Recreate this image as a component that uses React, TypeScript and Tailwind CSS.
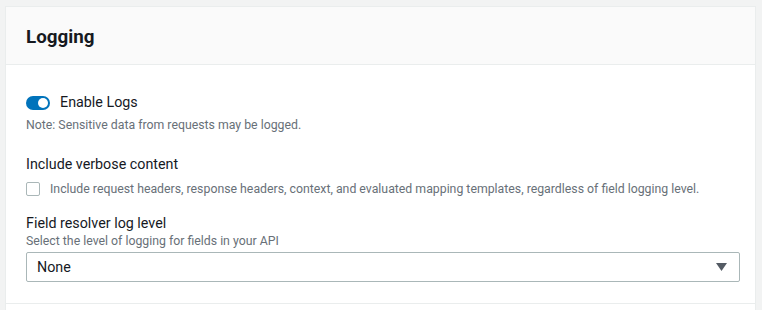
import React from 'react';

const font = { fontFamily: '"Amazon Ember", Roboto, "Helvetica Neue", Arial, sans-serif' };

const App: React.FC = () => {
  return (
    <div className="min-h-[310px] bg-[#f2f3f3] pt-[7px] pl-[6px] pr-[7px]" style={font}>
      <div className="bg-white shadow-[0_0_0_1px_#eaeded]">
        {/* Header */}
        <div className="h-[58px] bg-[#fafafa] border-b border-[#eaeded] flex items-center px-[20px] pt-[3px]">
          <h2 className="text-[18.8px] font-bold text-[#16191f]">Logging</h2>
        </div>

        {/* Body */}
        <div className="px-[20px] pt-[30px] pb-[21px] border-b border-[#eaeded]">
          <div className="flex items-center gap-[10px] h-[16px]">
            <div className="w-[24px] h-[14px] rounded-full bg-[#0073bb] flex items-center justify-end pr-[2px]">
              <div className="w-[10px] h-[10px] rounded-full bg-white"></div>
            </div>
            <span className="text-[14.3px] text-[#16191f]">Enable Logs</span>
          </div>
          <p className="text-[12.3px] text-[#687078] mt-[6px] leading-[16px]">
            Note: Sensitive data from requests may be logged.
          </p>

          <div className="mt-[21px] text-[14.3px] text-[#16191f] leading-[20px]">Include verbose content</div>
          <div className="flex items-center gap-[10px] mt-[6px]">
            <div className="w-[14px] h-[14px] rounded-[2px] border border-[#aab7b8] bg-white"></div>
            <span className="text-[12.3px] text-[#687078]">
              Include request headers, response headers, context, and evaluated mapping templates, regardless of field logging level.
            </span>
          </div>

          <div className="mt-[15px] text-[14.3px] text-[#16191f] leading-[20px]">Field resolver log level</div>
          <div className="text-[12.3px] text-[#687078] leading-[16px]">Select the level of logging for fields in your API</div>
          <div className="mt-[3px] mr-[-5px] h-[30px] border border-[#aab7b8] rounded-[2px] flex items-center justify-between pl-[10px] pr-[12px]">
            <span className="text-[14.3px] text-[#16191f]">None</span>
            <svg width="11" height="8" viewBox="0 0 11 8">
              <path d="M0 0 H11 L5.5 8 Z" fill="#545b64" />
            </svg>
          </div>
        </div>
        <div className="h-[7px]"></div>
      </div>
    </div>
  );
};

export default App;
